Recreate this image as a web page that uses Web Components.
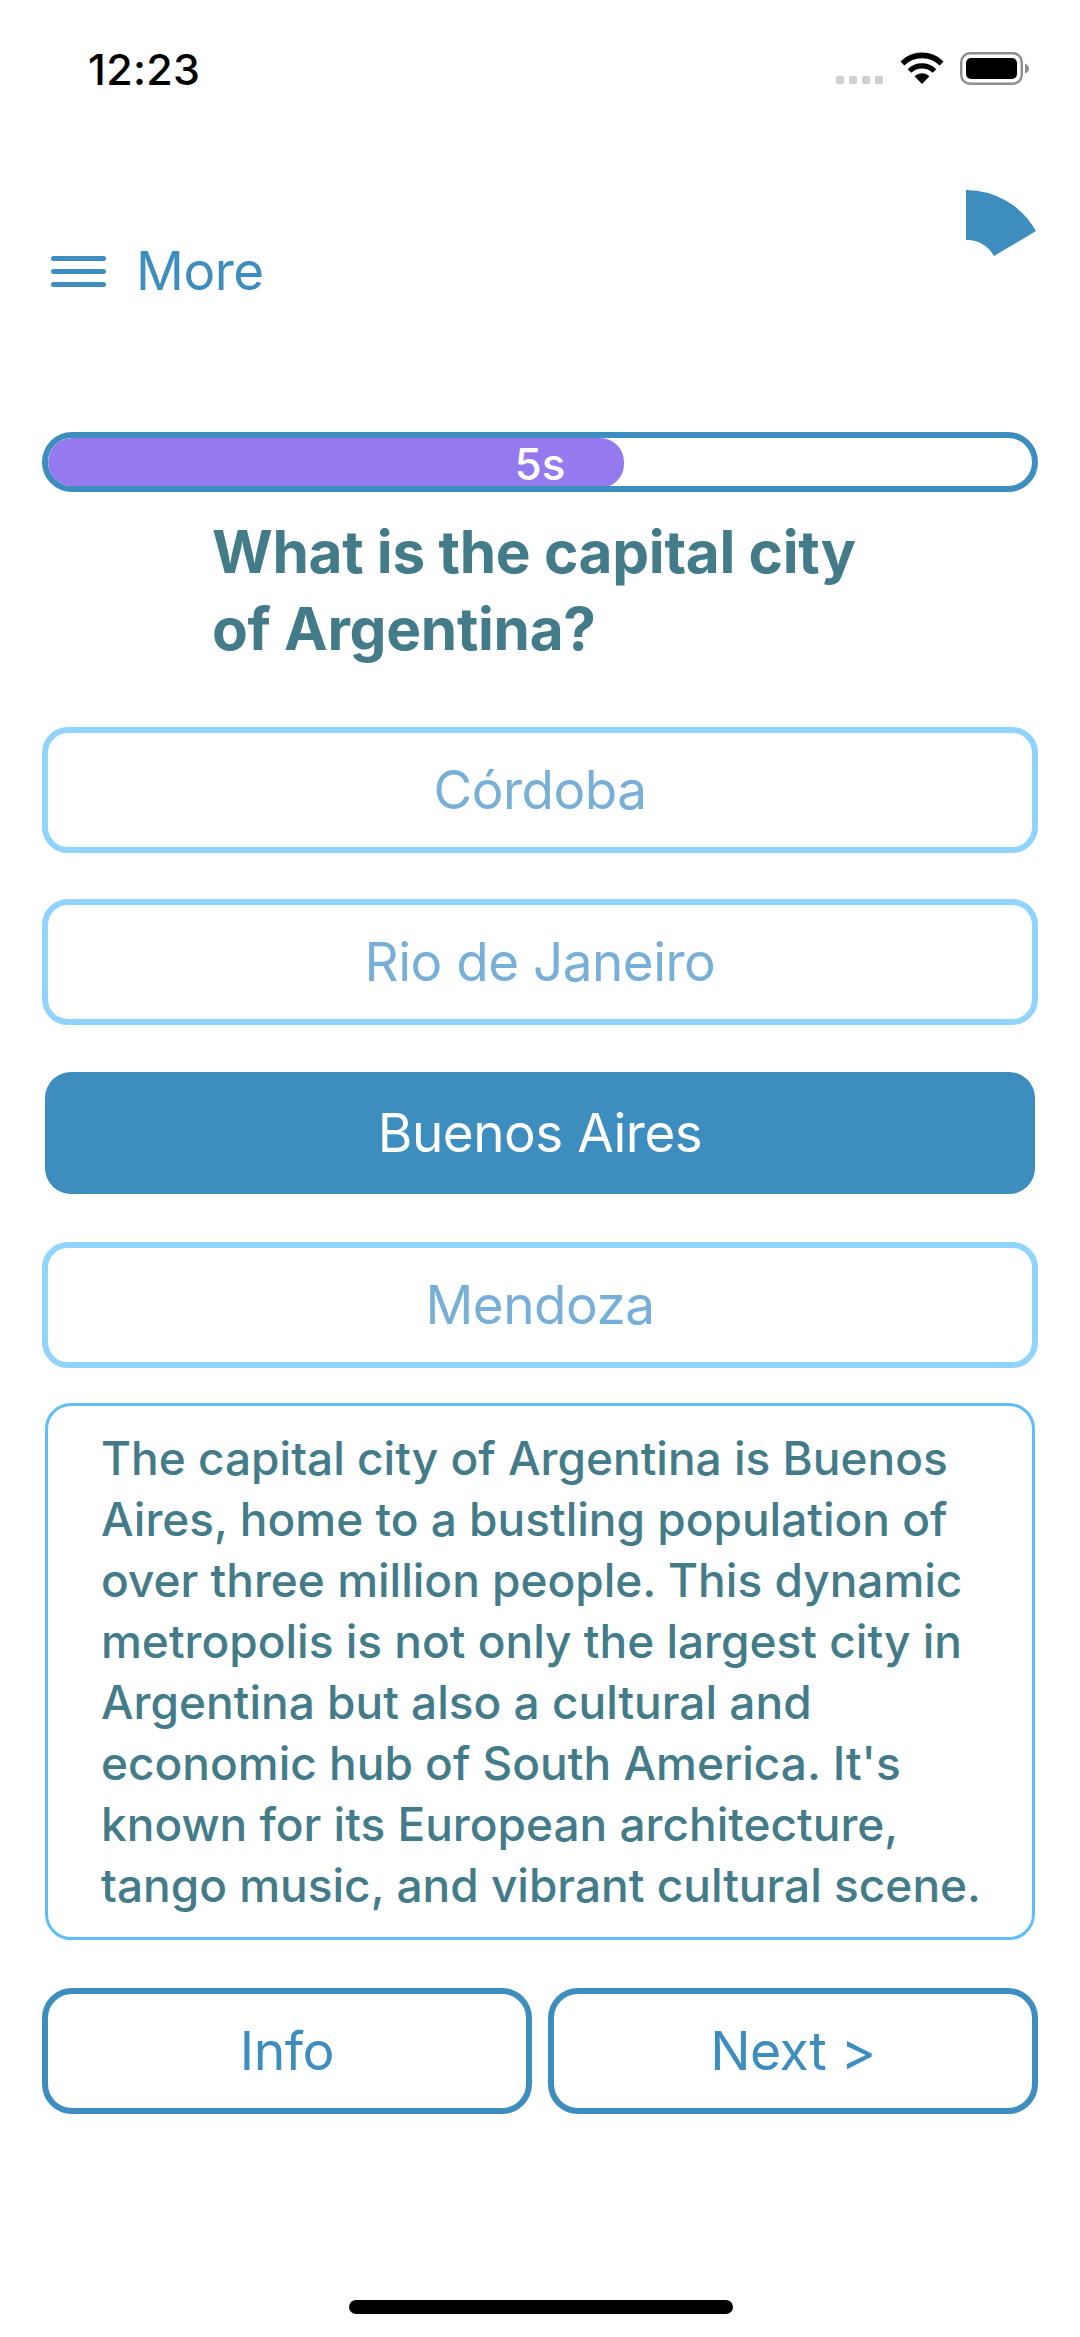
<!DOCTYPE html>
<html>
<head>
<meta charset="utf-8">
<title>Quiz</title>
<style>
  html, body { margin: 0; background: #fff; }
  body { width: 1080px; height: 2337px; overflow: hidden; font-family: Inter, "Noto Sans", sans-serif; }
  main { display: flex; flex-direction: column; height: 100%; }
  quiz-option + quiz-option { margin-top: 46px; }
  quiz-option[selected] { margin-top: 47px; margin-bottom: 48px; width: 990px; margin-left: 45px; }
  quiz-option[selected] + quiz-option { margin-top: 0; }
</style>
</head>
<body>
<main>
  <status-bar time="12:23"></status-bar>
  <quiz-header label="More"></quiz-header>
  <quiz-timer value="5s" percent="58.5"></quiz-timer>
  <quiz-question>What is the capital city<br>of Argentina?</quiz-question>
  <quiz-option>Córdoba</quiz-option>
  <quiz-option>Rio de Janeiro</quiz-option>
  <quiz-option selected>Buenos Aires</quiz-option>
  <quiz-option>Mendoza</quiz-option>
  <quiz-info>The capital city of Argentina is Buenos Aires, home to a bustling population of over three million people. This dynamic metropolis is not only the largest city in Argentina but also a cultural and economic hub of South America. It's known for its European architecture, tango music, and vibrant cultural scene.</quiz-info>
  <quiz-actions>
    <quiz-action>Info</quiz-action>
    <quiz-action>Next &gt;</quiz-action>
  </quiz-actions>
  <home-bar></home-bar>
</main>

<script>
function shadow(el, html) {
  el.attachShadow({ mode: 'open' }).innerHTML = html
}

class StatusBar extends HTMLElement {
  connectedCallback() {
    shadow(this, `
      <style>
        :host { display: flex; align-items: flex-start; height: 130px; color: #000; }
        .time { margin: 44px 0 0 88px; font-size: 43px; line-height: 50px; font-weight: 500; letter-spacing: .3px; }
        .right { margin-left: auto; margin-right: 50px; margin-top: 51px; display: flex; align-items: flex-start; }
        .dots { display: flex; gap: 5px; margin: 25px 0 0; }
        .dots i { width: 8px; height: 8px; border-radius: 2px; background: #cfcfcf; }
        svg { display: block; }
        .wifi { margin-left: 17px; }
        .bat { margin-left: 16px; margin-top: 1px; }
      </style>
      <span class="time">${this.getAttribute('time')}</span>
      <div class="right">
        <div class="dots"><i></i><i></i><i></i><i></i></div>
        <svg class="wifi" width="44" height="33" viewBox="0 0 44 33">
          <path d="M22 33 L14.5 25.2 A11 11 0 0 1 29.5 25.2 Z" fill="#000"/>
          <path d="M9.5 20 A18 18 0 0 1 34.5 20" fill="none" stroke="#000" stroke-width="5.2"/>
          <path d="M2.4 12.4 A28 28 0 0 1 41.6 12.4" fill="none" stroke="#000" stroke-width="5.6"/>
        </svg>
        <svg class="bat" width="70" height="33" viewBox="0 0 70 33">
          <rect x="1.2" y="1.2" width="60.6" height="30.6" rx="9" fill="none" stroke="#8e8e8e" stroke-width="2.4"/>
          <rect x="6" y="6" width="51" height="21" rx="5" fill="#000"/>
          <path d="M65 11.5 C67.5 12.5 69 14.5 69 16.5 C69 18.5 67.5 20.5 65 21.5 Z" fill="#8e8e8e"/>
        </svg>
      </div>`)
  }
}

class QuizHeader extends HTMLElement {
  connectedCallback() {
    shadow(this, `
      <style>
        :host { display: flex; position: relative; align-items: center; height: 160px; margin-top: 61px; margin-bottom: 81px; color: #3d8dbf; }
        .menu { display: flex; flex-direction: column; gap: 8px; margin-left: 51px; width: 55px; }
        .menu i { height: 5px; border-radius: 3px; background: #3d8dbf; }
        .label { margin-left: 30px; font-size: 53px; line-height: 60px; font-weight: 430; letter-spacing: -.5px; }
        .logo { position: absolute; left: 966px; top: -1px; }
      </style>
      <div class="menu"><i></i><i></i><i></i></div>
      <span class="label">${this.getAttribute('label')}</span>
      <svg class="logo" width="72" height="68" viewBox="0 0 72 68">
        <path d="M0 0 A80 80 0 0 1 70 41 L28 66 A30 30 0 0 0 0 50 Z" fill="#3d8dbf"/>
      </svg>`)
  }
}

class QuizTimer extends HTMLElement {
  connectedCallback() {
    shadow(this, `
      <style>
        :host { display: grid; box-sizing: border-box; width: 996px; height: 60px; margin-left: 42px; border: 6px solid #3d8dbf; border-radius: 30px; overflow: hidden; align-items: center; }
        .fill, .value { grid-area: 1 / 1; }
        .fill { height: 100%; width: ${this.getAttribute('percent')}%; background: #9579ee; border-radius: 24px; }
        .value { text-align: center; color: #fff; font-size: 44px; line-height: 48px; font-weight: 500; padding-top: 2px; }
      </style>
      <div class="fill"></div>
      <div class="value">${this.getAttribute('value')}</div>`)
  }
}

class QuizQuestion extends HTMLElement {
  connectedCallback() {
    shadow(this, `
      <style>
        :host { display: block; margin: 21px 0 60px 212px; color: #437b88; font-size: 58.5px; line-height: 77px; font-weight: 700; letter-spacing: -.3px; }
      </style>
      <slot></slot>`)
  }
}

class QuizOption extends HTMLElement {
  connectedCallback() {
    var picked = this.hasAttribute('selected')
    shadow(this, `
      <style>
        :host { display: flex; box-sizing: border-box; align-items: center; justify-content: center; width: 996px; height: ${picked ? 122 : 126}px; margin-left: 42px; border-radius: 26px;
          font-size: 53px; line-height: 60px; font-weight: 430; letter-spacing: -.5px;
          color: ${picked ? '#fff' : '#78afd6'};
          background: ${picked ? '#3d8dbf' : '#fff'};
          border: ${picked ? 'none' : '6px solid #90d4fd'}; }
      </style>
      <slot></slot>`)
  }
}

class QuizInfo extends HTMLElement {
  connectedCallback() {
    shadow(this, `
      <style>
        :host { display: block; box-sizing: border-box; width: 990px; height: 537px; margin: 35px 0 48px 45px; padding: 22px 30px 0 53px; border: 3px solid #5fbdfa; border-radius: 26px;
          color: #437b88; font-size: 46px; line-height: 61px; font-weight: 540; }
      </style>
      <slot></slot>`)
  }
}

class QuizActions extends HTMLElement {
  connectedCallback() {
    shadow(this, `
      <style>
        :host { display: grid; grid-template-columns: 490px 490px; gap: 16px; margin-left: 42px; }
      </style>
      <slot></slot>`)
  }
}

class QuizAction extends HTMLElement {
  connectedCallback() {
    shadow(this, `
      <style>
        :host { display: flex; box-sizing: border-box; align-items: center; justify-content: center; height: 126px; border: 6px solid #3d8dbf; border-radius: 30px; color: #3d8dbf; font-size: 53.5px; line-height: 60px; font-weight: 430; letter-spacing: -.5px; }
      </style>
      <slot></slot>`)
  }
}

class HomeBar extends HTMLElement {
  connectedCallback() {
    shadow(this, `
      <style>
        :host { display: block; width: 384px; height: 14px; margin: auto 0 23px 349px; border-radius: 7px; background: #000; }
      </style>`)
  }
}

customElements.define('status-bar', StatusBar)
customElements.define('quiz-header', QuizHeader)
customElements.define('quiz-timer', QuizTimer)
customElements.define('quiz-question', QuizQuestion)
customElements.define('quiz-option', QuizOption)
customElements.define('quiz-info', QuizInfo)
customElements.define('quiz-actions', QuizActions)
customElements.define('quiz-action', QuizAction)
customElements.define('home-bar', HomeBar)
</script>
</body>
</html>
